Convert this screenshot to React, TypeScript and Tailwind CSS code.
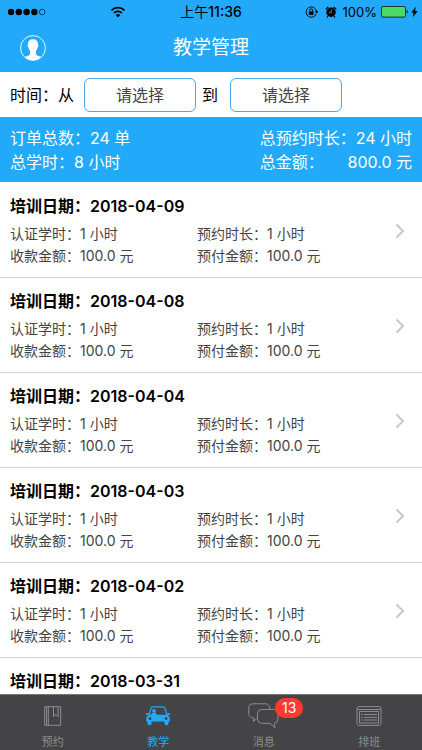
import type { ReactNode } from "react";

type Entry = { date: string; details?: string[] };

const details = ["认证学时：1 小时", "预约时长：1 小时", "收款金额：100.0 元", "预付金额：100.0 元"];

const records: Entry[] = [
  { date: "2018-04-09", details },
  { date: "2018-04-08", details },
  { date: "2018-04-04", details },
  { date: "2018-04-03", details },
  { date: "2018-04-02", details },
  { date: "2018-03-31" },
];

function StatusBar() {
  return (
    <div className="relative flex h-6 items-center justify-between pr-1 pl-2 text-black">
      <div className="flex items-center">
        <svg width="38" height="8" viewBox="0 0 38 8" fill="currentColor">
          <circle cx="3" cy="4" r="3.2" />
          <circle cx="10.8" cy="4" r="3.2" />
          <circle cx="18.6" cy="4" r="3.2" />
          <circle cx="26.4" cy="4" r="3.2" />
          <circle cx="34.2" cy="4" r="2.8" fill="none" stroke="currentColor" strokeWidth="0.6" />
        </svg>
        <svg className="ml-16 shrink-0" width="16" height="12" viewBox="0 0 16 12" fill="none" stroke="currentColor" strokeWidth="1.7">
          <path d="M1.5 4.4a9.2 9.2 0 0 1 13 0" />
          <path d="M4 7a5.7 5.7 0 0 1 8 0" />
          <path d="M8 11.4 5.7 9.1a3.3 3.3 0 0 1 4.6 0z" fill="currentColor" stroke="none" />
        </svg>
      </div>

      <p className="absolute left-1/2 -translate-x-1/2 text-sm leading-6 whitespace-nowrap">
        上午<span className="font-medium">11:36</span>
      </p>

      <div className="flex items-center">
        <svg width="14" height="12" viewBox="0 0 14 12" fill="none" stroke="currentColor" strokeWidth="0.9">
          <path d="M11.2 7.9A5.2 5.2 0 1 1 11.4 5" />
          <path d="M9.7 5h3.6l-1.8 2.4z" fill="currentColor" stroke="none" />
          <rect x="3.8" y="5.4" width="4.8" height="3.4" fill="currentColor" stroke="none" />
          <path d="M4.8 5.4V4.2a1.4 1.4 0 0 1 2.8 0v1.2" />
        </svg>
        <svg className="ml-1.5" width="12" height="12" viewBox="0 0 12 12">
          <circle cx="6" cy="6.3" r="4.7" fill="currentColor" />
          <path d="M.8 3.2 3.3 1M11.2 3.2 8.7 1M3 10.2 2 11.4M9 10.2l1 1.2" stroke="currentColor" strokeWidth="1.3" />
          <path d="M6.3 3.5v3.2H4" fill="none" stroke="#23a9f9" strokeWidth="0.9" />
        </svg>
        <p className="ml-1.5 text-[13px] leading-6">100%</p>
        <svg className="ml-1" width="28" height="12" viewBox="0 0 28 12">
          <rect x="0.5" y="0.5" width="24" height="10.6" rx="1.6" fill="#4cd964" stroke="#111" strokeWidth="0.8" />
          <path d="M25.8 3.8q2 2 0 4z" />
        </svg>
        <svg className="ml-0.5" width="7" height="12" viewBox="0 0 7 12" fill="currentColor">
          <path d="M4.8.8.3 6.6h2.4L1.8 11.2 6.7 5.1H4.1z" />
        </svg>
      </div>
    </div>
  );
}

function BookIcon() {
  return (
    <svg width="18" height="20" viewBox="0 0 18 20" fill="none" stroke="currentColor" strokeWidth="1">
      <path d="M.7.7h16v18.6H.7zM4.3.7v18.6M2.5.7v18.6M9.5.7v10l2.3-2.4 2.3 2.4V.7" />
    </svg>
  );
}

function CarIcon() {
  return (
    <svg width="26" height="20" viewBox="0 0 26 20" fill="currentColor">
      <path d="M4 9.500 6 2.200Q6.400.9 7.700.9h10.600q1.300 0 1.700 1.300l2 7.300" fill="none" stroke="currentColor" strokeWidth="1.200" />
      <circle cx="9" cy="4.800" r="1.900" />
      <path d="M6 9.500Q6 6.500 9 6.500t3 3z" />
      <ellipse cx="2.300" cy="8" rx="1.700" ry="1" />
      <ellipse cx="23.700" cy="8" rx="1.700" ry="1" />
      <path
        fillRule="evenodd"
        d="M4 8.800h18q2.800 1 2.800 3.600v3.200H1.200v-3.200q0-2.600 2.800-3.600zM5 10.900a1.500 1.500 0 1 0 0 3 1.500 1.500 0 0 0 0-3zm16 0a1.500 1.500 0 1 0 0 3 1.500 1.500 0 0 0 0-3z"
      />
      <path d="M2.500 15h4v2.600q0 1.600-2 1.600t-2-1.600zM19.500 15h4v2.600q0 1.600-2 1.600t-2-1.600z" />
    </svg>
  );
}

function ChatIcon() {
  return (
    <svg width="31" height="26" viewBox="0 0 31 26" fill="none" stroke="currentColor" strokeWidth="1">
      <path d="M9.5 15.5h-.7l-3.600 3 .8-3.200Q.8 14.500.8 11V5Q.8.8 5 .8h12.500q4 0 4.500 5.500" />
      <path d="M13.500 6.500h12q4.500 0 4.500 4V16q0 3.600-3.600 4.200l.6 4.600-5-4.500h-8.500q-4 0-4-4v-5.800q0-4 4-4z" />
    </svg>
  );
}

function ListIcon() {
  return (
    <svg width="26" height="20" viewBox="0 0 26 20" fill="none" stroke="currentColor" strokeWidth="1">
      <rect x="1" y="0.6" width="24" height="18.800" rx="2" />
      <rect x="3.500" y="5.500" width="19" height="11.500" />
      <path d="M1 3.500h24M5 8.500h2M5 11.300h2M5 14h2M8 8.500h13M8 11.300h13M8 14h13" />
    </svg>
  );
}

type TabProps = { label: string; icon: ReactNode; active?: boolean; badge?: string };

function Tab({ label, icon, active = false, badge }: TabProps) {
  return (
    <a href="#" className={active ? "flex flex-1 flex-col items-center text-[#23a9f9]" : "flex flex-1 flex-col items-center text-[#8d8d8f]"}>
      <span className="relative flex h-10 items-center pt-0.5">
        {icon}
        {badge && (
          <span className="absolute top-[3px] left-[27px] flex h-5 w-7 items-center justify-center rounded-full bg-[#ff3b30] text-sm text-white">
            {badge}
          </span>
        )}
      </span>
      <span className="text-[11px] leading-[14px]">{label}</span>
    </a>
  );
}

export default function App() {
  return (
    <div className="flex h-screen flex-col overflow-hidden bg-white font-[Inter,'Noto_Sans_CJK_SC',sans-serif] text-black">
      {/* HEADER */}
      <header className="shrink-0 bg-[#23a9f9]">
        <StatusBar />
        <div className="relative flex h-12 items-center justify-center">
          <button aria-label="个人中心" className="absolute left-5 text-white">
            <svg width="26" height="26" viewBox="0 0 26 26">
              <circle cx="13" cy="13" r="12.4" fill="none" stroke="currentColor" strokeWidth="0.9" />
              <path
                fill="currentColor"
                d="M13 4.200c3.500 0 5.200 2 5 5.400.6.3.4 2.500-.5 3-.3 1.700-.8 2.700-1.500 3.500v3.200c.5 1.400 3.700 1.800 5.300 2.800A12.400 12.400 0 0 1 4.700 22.100c1.600-1 4.800-1.400 5.300-2.800v-3.200c-.7-.8-1.200-1.800-1.500-3.500-.9-.5-1.100-2.700-.5-3-.2-3.400 1.500-5.400 5-5.400z"
              />
            </svg>
          </button>
          <h1 className="text-[19px] leading-6 text-white">教学管理</h1>
        </div>
      </header>

      {/* DATE RANGE */}
      <div className="flex h-[45px] shrink-0 items-center pl-2.5 text-base">
        <span>时间：从</span>
        <button aria-label="开始日期" className="ml-2.5 h-[34px] w-28 rounded-md border border-[#4aa9e9] text-[#444]">
          请选择
        </button>
        <span className="ml-1.5">到</span>
        <button aria-label="结束日期" className="ml-3 h-[34px] w-28 rounded-md border border-[#4aa9e9] text-[#444]">
          请选择
        </button>
      </div>

      {/* TOTALS */}
      <section className="flex h-[65px] shrink-0 items-center justify-between bg-[#23a9f9] px-2.5 text-base leading-6 text-white">
        <div>
          <p>订单总数：24 单</p>
          <p>总学时：8 小时</p>
        </div>
        <div>
          <p>总预约时长：24 小时</p>
          <p className="flex justify-between">
            <span>总金额：</span>
            <span>800.0 元</span>
          </p>
        </div>
      </section>

      {/* RECORDS */}
      <ul className="min-h-0 flex-1 overflow-hidden pt-px">
        {records.map((record) => (
          <li key={record.date} className="border-b border-[#d2d2d4]">
            <a href="#" className="flex items-center justify-between pt-[11px] pr-[17px] pb-2.5 pl-2.5">
              <div className="flex-1">
                <h2 className="text-base leading-6 font-semibold">培训日期：{record.date}</h2>
                {record.details && (
                  <div className="mt-[5px] grid grid-cols-[187px_1fr] text-sm leading-[22px] text-[#444]">
                    {record.details.map((text) => (
                      <p key={text}>{text}</p>
                    ))}
                  </div>
                )}
              </div>
              {record.details && (
                <svg width="10" height="16" viewBox="0 0 10 16" fill="none" stroke="#c7c7cc" strokeWidth="2">
                  <path d="m1.500 1.500 6.500 6.500-6.500 6.500" />
                </svg>
              )}
            </a>
          </li>
        ))}
      </ul>

      {/* TAB BAR */}
      <nav className="flex h-14 shrink-0 border-t border-[#77777a] bg-[#444446]">
        <Tab label="预约" icon={<BookIcon />} />
        <Tab label="教学" icon={<CarIcon />} active />
        <Tab label="消息" icon={<ChatIcon />} badge="13" />
        <Tab label="排班" icon={<ListIcon />} />
      </nav>
    </div>
  );
}
